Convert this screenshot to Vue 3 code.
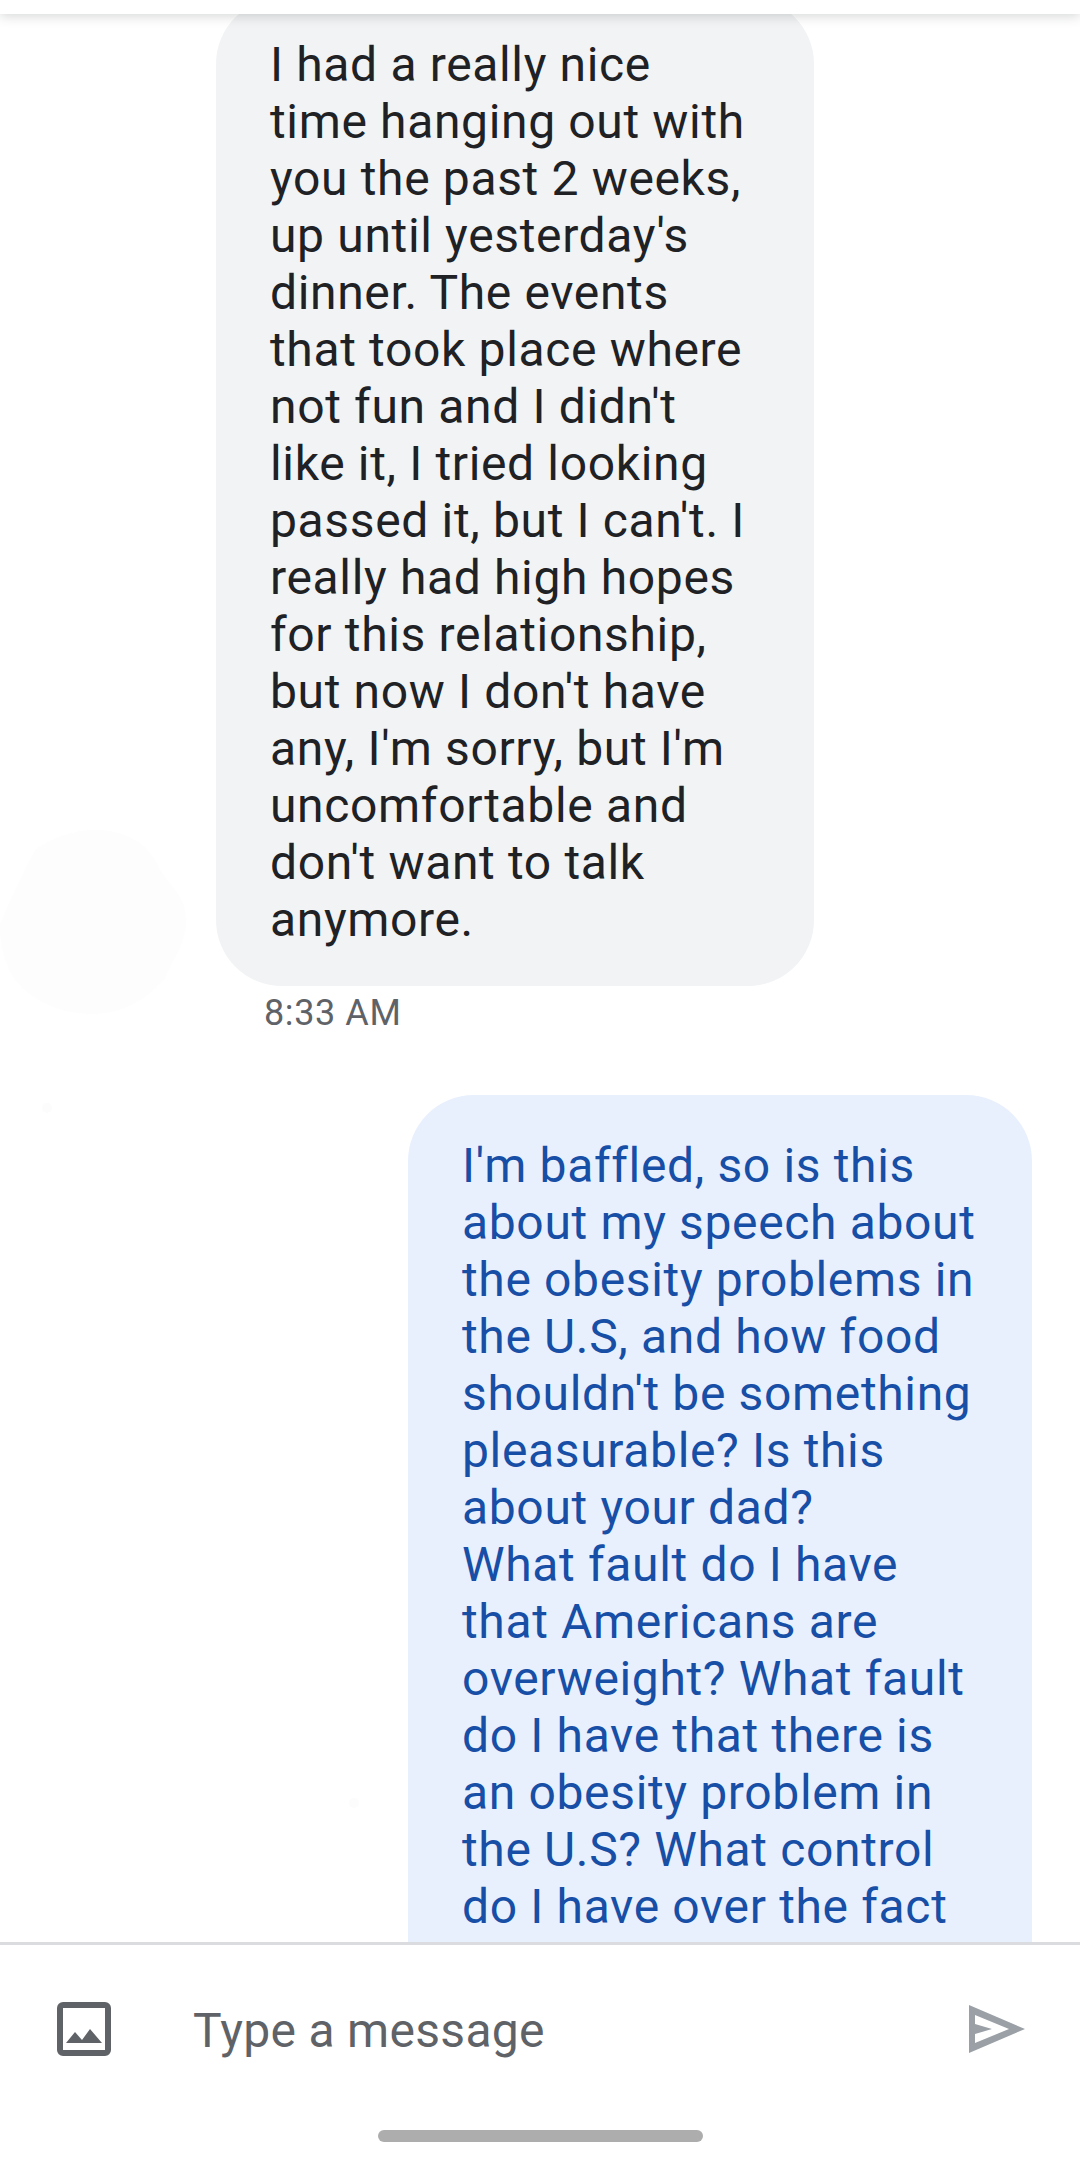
<template>
  <div class="screen">
    <div class="top-bar"></div>

    <div class="thread">
      <svg class="blob" viewBox="0 0 186 184">
        <path fill="#fdfdfd" d="M95 0C125 0 148 12 160 40C172 58 186 68 186 90C186 115 172 130 165 148C145 172 120 184 92 184C60 184 30 170 14 148C4 132 0 115 0 95C10 70 22 45 35 20C52 8 72 0 95 0Z" />
      </svg>
      <div class="speck speck-a"></div>
      <div class="speck speck-b"></div>

      <div class="message incoming">
        <div class="bubble">
          <span v-for="line in incomingLines" :key="line" class="line">{{ line }}</span>
        </div>
        <div class="time">8:33 AM</div>
      </div>

      <div class="message outgoing">
        <div class="bubble">
          <span v-for="line in outgoingLines" :key="line" class="line">{{ line }}</span>
        </div>
      </div>
    </div>

    <div class="composer">
      <svg class="attach" viewBox="0 0 54 54">
        <path fill="#5f6368" fill-rule="evenodd" d="M6 0h42a6 6 0 0 1 6 6v42a6 6 0 0 1-6 6H6a6 6 0 0 1-6-6V6a6 6 0 0 1 6-6zM6 6v42h42V6z" />
        <path fill="#5f6368" d="M9 41l9-11 7 8 8-11 12 14z" />
      </svg>
      <span class="placeholder">Type a message</span>
      <svg class="send" viewBox="0 0 56 48">
        <path fill="#9aa0a6" fill-rule="evenodd" d="M0 0l56 24L0 48zM6 10v9l17 5-17 5v9l34-14z" />
      </svg>
    </div>

    <div class="nav-area">
      <div class="home-bar"></div>
    </div>
  </div>
</template>

<script setup>
const incomingLines = [
  'I had a really nice',
  'time hanging out with',
  'you the past 2 weeks,',
  "up until yesterday's",
  'dinner. The events',
  'that took place where',
  "not fun and I didn't",
  'like it, I tried looking',
  "passed it, but I can't. I",
  'really had high hopes',
  'for this relationship,',
  "but now I don't have",
  "any, I'm sorry, but I'm",
  'uncomfortable and',
  "don't want to talk",
  'anymore.'
]

const outgoingLines = [
  "I'm baffled, so is this",
  'about my speech about',
  'the obesity problems in',
  'the U.S, and how food',
  "shouldn't be something",
  'pleasurable? Is this',
  'about your dad?',
  'What fault do I have',
  'that Americans are',
  'overweight? What fault',
  'do I have that there is',
  'an obesity problem in',
  'the U.S? What control',
  'do I have over the fact'
]
</script>

<style>
body {
  background: #fff;
}
</style>

<style scoped>
.screen {
  width: 1080px;
  height: 2158px;
  display: flex;
  flex-direction: column;
  overflow: hidden;
  background: #fff;
  font-family: Roboto, "Liberation Sans", sans-serif;
}

.top-bar {
  height: 14px;
  flex: none;
  position: relative;
  z-index: 2;
  background: #fff;
  box-shadow: 0 2px 12px rgba(60, 64, 67, 0.22);
}

.thread {
  flex: 1;
  min-height: 0;
  position: relative;
  overflow: hidden;
}

.blob {
  position: absolute;
  left: 0;
  top: 816px;
  width: 186px;
  height: 184px;
}

.speck {
  position: absolute;
  width: 10px;
  height: 10px;
  border-radius: 50%;
  background: #fcfcfc;
}

.speck-a {
  left: 42px;
  top: 1089px;
}

.speck-b {
  left: 349px;
  top: 1784px;
}

.message {
  position: relative;
  display: flex;
  flex-direction: column;
}

.incoming {
  margin-top: -16px;
  margin-left: 216px;
  align-items: flex-start;
}

.outgoing {
  margin-top: 61px;
  margin-left: 408px;
  margin-right: 48px;
}

.bubble {
  border-radius: 66px;
  font-size: 48px;
  line-height: 57px;
  letter-spacing: 0.65px;
}

.incoming .bubble {
  width: 598px;
  box-sizing: border-box;
  padding: 38px 54px;
  background: #f1f3f4;
  color: #202124;
}

/* the bubble runs on under the composer, only its top is on screen */
.outgoing .bubble {
  padding: 42px 54px 200px;
  background: #e8f0fe;
  color: #174ea6;
}

.line {
  display: block;
  white-space: nowrap;
}

.time {
  margin-top: 6px;
  margin-left: 48px;
  font-size: 36px;
  line-height: 42px;
  letter-spacing: 0.6px;
  color: #5f6368;
}

.composer {
  flex: none;
  height: 170px;
  display: flex;
  align-items: center;
  position: relative;
  background: #fff;
  border-top: 3px solid #dadce0;
}

.attach {
  width: 54px;
  height: 54px;
  margin-left: 57px;
  margin-bottom: 2px;
  flex: none;
}

.placeholder {
  margin-left: 82px;
  font-size: 48px;
  letter-spacing: 0.3px;
  color: #5f6368;
}

.send {
  width: 56px;
  height: 48px;
  margin-left: auto;
  margin-right: 55px;
  margin-bottom: 2px;
  flex: none;
}

.nav-area {
  flex: none;
  height: 43px;
  box-sizing: border-box;
  padding-top: 15px;
  display: flex;
  justify-content: center;
  align-items: flex-start;
  background: #fff;
}

.home-bar {
  width: 325px;
  height: 12px;
  border-radius: 6px;
  background: #adadad;
}
</style>
